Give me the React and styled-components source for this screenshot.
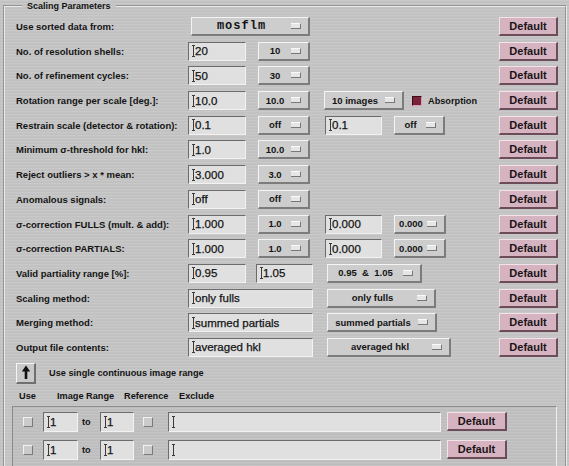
import React from 'react'
import styled, { createGlobalStyle } from 'styled-components'

const GlobalStyle = createGlobalStyle`
  html, body {
    margin: 0;
    padding: 0;
    height: 100%;
    overflow: hidden;
  }
  body {
    background-color: #c4c4c4;
    background-image: repeating-linear-gradient(
      180deg,
      rgba(255, 255, 255, 0.08) 0px,
      rgba(255, 255, 255, 0.08) 1px,
      rgba(0, 0, 0, 0.03) 2px,
      rgba(0, 0, 0, 0) 3px
    );
    font-family: "Liberation Sans", Arial, Helvetica, sans-serif;
    color: #141414;
  }
`

const Frame = styled.fieldset`
  margin: 0 0 0 3px;
  width: 542px;
  padding: 5px 7px 0 11px;
  border: 2px groove #e8e8e8;
  border-bottom: none;
  min-height: 480px;
`

const Title = styled.legend`
  margin-left: 6px;
  padding: 0 5px;
  font-size: 9px;
  line-height: 12px;
  font-weight: bold;
`

const ParamList = styled.div`
  display: flex;
  flex-direction: column;
  gap: 5.7px;
`

const Row = styled.div`
  display: flex;
  align-items: center;
  height: 19px;
`

const Label = styled.div`
  width: 172px;
  flex: none;
  font-size: 9.5px;
  font-weight: bold;
  white-space: nowrap;
`

const Widgets = styled.div`
  flex: 1;
  display: flex;
  align-items: center;
  height: 100%;
`

const Field = styled.div`
  box-sizing: border-box;
  width: ${p => p.$w || 58}px;
  margin-left: ${p => p.$ml || 0}px;
  height: ${p => p.$h || 19}px;
  flex: none;
  display: flex;
  align-items: center;
  padding-left: 3px;
  background: #dfe0df;
  border-top: 1px solid #6c6c6c;
  border-left: 1px solid #6c6c6c;
  border-bottom: 1px solid #f2f2f2;
  border-right: 1px solid #f2f2f2;
  font-size: 11.5px;
  -webkit-text-stroke: 0.25px #141414;
  white-space: nowrap;
  overflow: hidden;
`

const Caret = () => (
  <svg width="3" height="12" viewBox="0 0 3 12" style={{ flex: 'none' }}>
    <path d="M0 0.5H3M1.5 0.5V11.5M0 11.5H3" stroke="#3a3a3a" strokeWidth="1" fill="none" />
  </svg>
)

const Menu = styled.div`
  box-sizing: border-box;
  width: ${p => p.$w}px;
  margin-left: ${p => p.$ml || 0}px;
  height: 19px;
  flex: none;
  display: flex;
  align-items: center;
  background: #cdcdcd;
  border-top: 1px solid #f4f4f4;
  border-left: 1px solid #f4f4f4;
  border-bottom: 2px solid #7c7c7c;
  border-right: 2px solid #7c7c7c;
  font-size: ${p => (p.$mono ? '12px' : '9.5px')};
  font-family: ${p => (p.$mono ? '"Liberation Mono", "DejaVu Sans Mono", monospace' : 'inherit')};
  font-weight: bold;
  letter-spacing: ${p => (p.$mono ? '1px' : '0')};
  white-space: pre;
`

const MenuText = styled.span`
  flex: 1;
  text-align: center;
  padding-left: 4px;
`

const MenuMark = styled.span`
  flex: none;
  width: 9px;
  height: 4px;
  margin: 0 7px 0 4px;
  background: #e6e6e6;
  border-top: 1px solid #fafafa;
  border-bottom: 1px solid #777;
  border-right: 1px solid #777;
`

const DefaultButton = styled.div`
  box-sizing: border-box;
  width: ${p => p.$w || 59}px;
  margin-left: ${p => (p.$ml === undefined ? 'auto' : `${p.$ml}px`)};
  height: 19px;
  flex: none;
  display: flex;
  align-items: center;
  justify-content: center;
  background: #d6b3c0;
  border-top: 1px solid #f3e2e8;
  border-left: 1px solid #f3e2e8;
  border-bottom: 2px solid #6b4c58;
  border-right: 2px solid #6b4c58;
  font-size: 11px;
  font-weight: bold;
  color: #1a1418;
`

const CheckBox = styled.span`
  box-sizing: border-box;
  display: inline-block;
  flex: none;
  width: 10px;
  height: 10px;
  margin-left: ${p => p.$ml || 0}px;
  background: ${p => (p.$on ? '#7b2238' : '#cbcbcb')};
  border-top: 1px solid ${p => (p.$on ? '#3e0c18' : '#f2f2f2')};
  border-left: 1px solid ${p => (p.$on ? '#3e0c18' : '#f2f2f2')};
  border-bottom: 1px solid ${p => (p.$on ? '#d9a0ae' : '#7a7a7a')};
  border-right: 1px solid ${p => (p.$on ? '#d9a0ae' : '#7a7a7a')};
`

const SmallText = styled.span`
  margin-left: ${p => p.$ml || 0}px;
  width: ${p => (p.$w ? `${p.$w}px` : 'auto')};
  font-size: 9.2px;
  font-weight: bold;
  white-space: nowrap;
`

const ArrowRow = styled.div`
  display: flex;
  align-items: center;
  gap: 13px;
  margin-top: 6px;
`

const ArrowButton = styled.div`
  box-sizing: border-box;
  width: 20px;
  height: 21px;
  display: flex;
  align-items: center;
  justify-content: center;
  background: #c9c9c9;
  border-top: 1px solid #f4f4f4;
  border-left: 1px solid #f4f4f4;
  border-bottom: 2px solid #707070;
  border-right: 2px solid #707070;
`

const HeaderRow = styled.div`
  display: grid;
  grid-template-columns: 38px 67px 55px auto;
  padding-left: 3px;
  margin-top: 6px;
  height: 12px;
  align-items: center;
  font-size: 9.2px;
  font-weight: bold;
`

const RangeBox = styled.div`
  margin: 4px 1px 0 -4px;
  padding: 5px 0 20px 10px;
  border-top: 1px solid #8a8a8a;
  border-left: 1px solid #8a8a8a;
  border-right: 1px solid #eeeeee;
  background: rgba(0, 0, 0, 0.015);
  display: flex;
  flex-direction: column;
  gap: 8px;
`

const RangeRow = styled.div`
  display: flex;
  align-items: center;
  height: 20px;
`

const params = [
  { label: 'Use sorted data from:', items: [{ t: 'menu', v: 'mosflm', w: 119, ml: 3, mono: true }] },
  { label: 'No. of resolution shells:', items: [{ t: 'field', v: '20' }, { t: 'menu', v: '10', w: 52, ml: 12 }] },
  { label: 'No. of refinement cycles:', items: [{ t: 'field', v: '50' }, { t: 'menu', v: '30', w: 52, ml: 12 }] },
  {
    label: 'Rotation range per scale [deg.]:',
    items: [
      { t: 'field', v: '10.0' },
      { t: 'menu', v: '10.0', w: 52, ml: 12 },
      { t: 'menu', v: '10 images', w: 80, ml: 14 },
      { t: 'check', ml: 8 },
      { t: 'text', v: 'Absorption', ml: 6 },
    ],
  },
  {
    label: 'Restrain scale (detector & rotation):',
    items: [
      { t: 'field', v: '0.1' },
      { t: 'menu', v: 'off', w: 52, ml: 12 },
      { t: 'field', v: '0.1', w: 57, ml: 15 },
      { t: 'menu', v: 'off', w: 51, ml: 12 },
    ],
  },
  { label: 'Minimum σ-threshold for hkl:', items: [{ t: 'field', v: '1.0' }, { t: 'menu', v: '10.0', w: 52, ml: 12 }] },
  { label: 'Reject outliers > x * mean:', items: [{ t: 'field', v: '3.000' }, { t: 'menu', v: '3.0', w: 52, ml: 12 }] },
  { label: 'Anomalous signals:', items: [{ t: 'field', v: 'off' }, { t: 'menu', v: 'off', w: 52, ml: 12 }] },
  {
    label: 'σ-correction FULLS (mult. & add):',
    items: [
      { t: 'field', v: '1.000' },
      { t: 'menu', v: '1.0', w: 52, ml: 12 },
      { t: 'field', v: '0.000', w: 57, ml: 15 },
      { t: 'menu', v: '0.000', w: 52, ml: 12 },
    ],
  },
  {
    label: 'σ-correction PARTIALS:',
    items: [
      { t: 'field', v: '1.000' },
      { t: 'menu', v: '1.0', w: 52, ml: 12 },
      { t: 'field', v: '0.000', w: 57, ml: 15 },
      { t: 'menu', v: '0.000', w: 52, ml: 12 },
    ],
  },
  {
    label: 'Valid partiality range [%]:',
    items: [
      { t: 'field', v: '0.95' },
      { t: 'field', v: '1.05', w: 57, ml: 10 },
      { t: 'menu', v: '0.95  &  1.05', w: 95, ml: 14 },
    ],
  },
  { label: 'Scaling method:', items: [{ t: 'field', v: 'only fulls', w: 125 }, { t: 'menu', v: 'only fulls', w: 109, ml: 14 }] },
  { label: 'Merging method:', items: [{ t: 'field', v: 'summed partials', w: 125 }, { t: 'menu', v: 'summed partials', w: 110, ml: 14 }] },
  { label: 'Output file contents:', items: [{ t: 'field', v: 'averaged hkl', w: 125 }, { t: 'menu', v: 'averaged hkl', w: 124, ml: 14 }] },
]

const Widget = ({ item }) => {
  if (item.t === 'field') {
    return (
      <Field $w={item.w} $ml={item.ml}>
        <Caret />
        <span>{item.v}</span>
      </Field>
    )
  }
  if (item.t === 'menu') {
    return (
      <Menu $w={item.w} $ml={item.ml} $mono={item.mono}>
        <MenuText>{item.v}</MenuText>
        <MenuMark />
      </Menu>
    )
  }
  if (item.t === 'check') return <CheckBox $ml={item.ml} $on />
  return <SmallText $ml={item.ml}>{item.v}</SmallText>
}

const UpArrow = () => (
  <svg width="10" height="15" viewBox="0 0 10 15">
    <path d="M5 0.5L0.8 6.5H3.7V14H6.3V6.5H9.2Z" fill="#111" />
  </svg>
)

const ranges = [1, 2]

export default function App() {
  return (
    <>
      <GlobalStyle />
      <Frame>
        <Title>Scaling Parameters</Title>
        <ParamList>
          {params.map(p => (
            <Row key={p.label}>
              <Label>{p.label}</Label>
              <Widgets>
                {p.items.map((it, i) => (
                  <Widget key={i} item={it} />
                ))}
              </Widgets>
              <DefaultButton>Default</DefaultButton>
            </Row>
          ))}
        </ParamList>

        <ArrowRow>
          <ArrowButton>
            <UpArrow />
          </ArrowButton>
          <SmallText>Use single continuous image range</SmallText>
        </ArrowRow>

        <HeaderRow>
          <span>Use</span>
          <span>Image Range</span>
          <span>Reference</span>
          <span>Exclude</span>
        </HeaderRow>

        <RangeBox>
          {ranges.map(r => (
            <RangeRow key={r}>
              <CheckBox />
              <Field $w={35} $ml={10} $h={20}>
                <Caret />
                <span>1</span>
              </Field>
              <SmallText $ml={4} $w={18}>to</SmallText>
              <Field $w={34} $h={20}>
                <Caret />
                <span>1</span>
              </Field>
              <CheckBox $ml={9} />
              <Field $w={273} $ml={15} $h={20}>
                <Caret />
              </Field>
              <DefaultButton $w={60} $ml={6}>Default</DefaultButton>
            </RangeRow>
          ))}
        </RangeBox>
      </Frame>
    </>
  )
}
